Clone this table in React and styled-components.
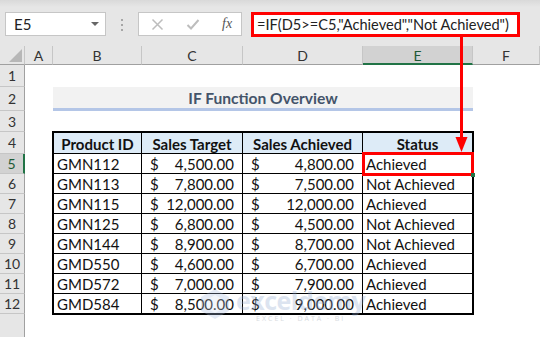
import React from 'react';
import styled, { createGlobalStyle } from 'styled-components';

const Global = createGlobalStyle`
  html, body { margin: 0; padding: 0; background: #fff; }
  body { font-family: Lato, "Open Sans", sans-serif; }
`;

const Page = styled.div`
  position: relative;
  width: 540px;
  height: 337px;
  overflow: hidden;
  display: flex;
  flex-direction: column;
  background: #fff;
`;

const Toolbar = styled.div`
  height: 46px;
  flex: none;
  box-sizing: border-box;
  padding-top: 12px;
  background: linear-gradient(#d9d9d9 0, #e6e6e6 7px);
  display: flex;
  align-items: flex-start;
`;

const NameBox = styled.div`
  margin-left: 5px;
  width: 101px;
  height: 24px;
  box-sizing: border-box;
  background: #fff;
  border: 1px solid #c6c6c6;
  display: flex;
  align-items: center;
  justify-content: space-between;
  padding: 0 6px 0 8px;
  font-size: 15px;
  color: #222;
`;

const DropTri = styled.span`
  width: 0;
  height: 0;
  border-left: 4px solid transparent;
  border-right: 4px solid transparent;
  border-top: 4px solid #666;
`;

const Gripper = styled.div`
  margin: 7px 0 0 15px;
  width: 2px;
  display: flex;
  flex-direction: column;
  gap: 3px;
  span { width: 2px; height: 2px; background: #a6a6a6; display: block; }
`;

const FxBox = styled.div`
  margin-left: 15px;
  width: 104px;
  height: 24px;
  box-sizing: border-box;
  background: #fff;
  border: 1px solid #c6c6c6;
  display: flex;
  align-items: center;
  padding-left: 12px;
  gap: 22px;
`;

const FxText = styled.span`
  font-family: "Liberation Serif", serif;
  font-style: italic;
  font-size: 14px;
  color: #555;
`;

const FormulaBar = styled.div`
  margin-left: 9px;
  width: 269px;
  height: 25px;
  box-sizing: border-box;
  background: #fff;
  border: 3px solid #ff0000;
  display: flex;
  align-items: center;
  padding-left: 3px;
  font-size: 14.6px;
  color: #222;
  white-space: nowrap;
  overflow: hidden;
`;

const Sheet = styled.div`
  flex: 1;
  display: grid;
  grid-template-columns: 25px 28px 89px 101px 120px 110px 1fr;
  grid-template-rows: 19px 22px 24px 21px 22px repeat(8, 20px) 1fr;
`;

const Corner = styled.div`
  grid-column: 1;
  grid-row: 1;
  background: #e6e6e6;
  border-right: 1px solid #c6c6c6;
  border-bottom: 1px solid #a0a0a0;
  box-sizing: border-box;
  position: relative;
  &::after {
    content: '';
    position: absolute;
    right: 2px;
    bottom: 2px;
    border-left: 13px solid transparent;
    border-bottom: 13px solid #b7b7b7;
  }
`;

const ColHead = styled.div`
  grid-row: 1;
  box-sizing: border-box;
  background: ${p => (p.$active ? '#d2d2d2' : '#e6e6e6')};
  border-right: 1px solid #c6c6c6;
  border-bottom: ${p => (p.$active ? '2px solid #217346' : '1px solid #a0a0a0')};
  color: ${p => (p.$active ? '#1e5a36' : '#333')};
  font-size: 14px;
  display: flex;
  align-items: center;
  justify-content: center;
  padding-top: 1px;
`;

const RowHead = styled.div`
  grid-column: 1;
  box-sizing: border-box;
  background: ${p => (p.$active ? '#d2d2d2' : '#e6e6e6')};
  border-bottom: 1px solid #c6c6c6;
  border-right: ${p => (p.$active ? '2px solid #217346' : '1px solid #a0a0a0')};
  color: ${p => (p.$active ? '#1e5a36' : '#333')};
  font-size: 14px;
  display: flex;
  align-items: center;
  justify-content: center;
`;

const RowHeadFill = styled.div`
  grid-column: 1;
  grid-row: 14;
  background: #e6e6e6;
  border-right: 1px solid #a0a0a0;
`;

const Title = styled.div`
  grid-column: 3 / 7;
  grid-row: 3;
  box-sizing: border-box;
  background: #f2f2f2;
  border-bottom: 3px solid #b4c6e7;
  color: #44546a;
  font-weight: 700;
  font-size: 15.6px;
  display: flex;
  align-items: center;
  justify-content: center;
  padding-top: 1px;
`;

const Table = styled.div`
  grid-column: 3 / 7;
  grid-row: 5 / 14;
  margin: -1px;
  border: 2px solid #000;
  display: grid;
  grid-template-columns: 88px 101px 120px 1fr;
  grid-template-rows: 21px repeat(7, 20px) 1fr;
  font-size: 15px;
  color: #111;
`;

const Cell = styled.div`
  box-sizing: border-box;
  border-right: ${p => (p.$lastCol ? 'none' : '1px solid #000')};
  border-bottom: ${p => (p.$lastRow ? 'none' : '1px solid #000')};
  display: flex;
  align-items: center;
  white-space: nowrap;
  padding: 0 3px;
`;

const HeadCell = styled(Cell)`
  background: #ddebf7;
  font-weight: 700;
  justify-content: center;
  padding-top: 1px;
`;

const MoneyCell = styled(Cell)`
  justify-content: space-between;
  padding: 0 8px 0 8px;
`;

const Overlay = styled.svg`
  position: absolute;
  left: 0;
  top: 0;
  pointer-events: none;
`;

const Watermark = styled.div`
  position: absolute;
  left: 198px;
  top: 287px;
  display: flex;
  align-items: flex-start;
  gap: 4px;
  opacity: 0.3;
  pointer-events: none;
`;

const WmText = styled.div`
  display: flex;
  flex-direction: column;
  align-items: center;
`;

const WmBig = styled.span`
  font-family: "Open Sans", sans-serif;
  font-weight: 700;
  font-size: 25px;
  line-height: 26px;
  color: #8fa7cf;
  letter-spacing: -0.5px;
`;

const WmSmall = styled.span`
  font-family: "Open Sans", sans-serif;
  font-size: 7px;
  letter-spacing: 2px;
  color: #7c8796;
  margin-top: 1px;
`;

const cols = ['A', 'B', 'C', 'D', 'E', 'F'];
const data = [
  ['GMN112', '4,500.00', '4,800.00', 'Achieved'],
  ['GMN113', '7,800.00', '7,500.00', 'Not Achieved'],
  ['GMN115', '12,000.00', '12,000.00', 'Achieved'],
  ['GMN125', '6,800.00', '4,500.00', 'Not Achieved'],
  ['GMN144', '8,900.00', '8,700.00', 'Not Achieved'],
  ['GMD550', '4,600.00', '6,700.00', 'Achieved'],
  ['GMD572', '7,000.00', '7,900.00', 'Achieved'],
  ['GMD584', '8,500.00', '9,000.00', 'Achieved'],
];
const rowNums = [1, 2, 3, 4, 5, 6, 7, 8, 9, 10, 11, 12];

export default function App() {
  return (
    <Page>
      <Global />
      <Toolbar>
        <NameBox>
          <span>E5</span>
          <DropTri />
        </NameBox>
        <Gripper>
          <span /><span /><span />
        </Gripper>
        <FxBox>
          <svg width="13" height="13" viewBox="0 0 13 13">
            <path d="M1.5 1.5 L11.5 11.5 M11.5 1.5 L1.5 11.5" stroke="#bdbdbd" strokeWidth="1.5" fill="none" />
          </svg>
          <svg width="14" height="13" viewBox="0 0 14 13">
            <path d="M1.5 7 L5 10.5 L12.5 2" stroke="#bdbdbd" strokeWidth="2" fill="none" />
          </svg>
          <FxText>fx</FxText>
        </FxBox>
        <FormulaBar>=IF(D5&gt;=C5,"Achieved","Not Achieved")</FormulaBar>
      </Toolbar>
      <Sheet>
        <Corner />
        {cols.map((c, i) => (
          <ColHead key={c} $active={c === 'E'} style={{ gridColumn: i + 2 }}>
            {c}
          </ColHead>
        ))}
        {rowNums.map((n, i) => (
          <RowHead key={n} $active={n === 5} style={{ gridRow: i + 2 }}>
            {n}
          </RowHead>
        ))}
        <RowHeadFill />
        <Title>IF Function Overview</Title>
        <Table>
          <HeadCell>Product ID</HeadCell>
          <HeadCell>Sales Target</HeadCell>
          <HeadCell>Sales Achieved</HeadCell>
          <HeadCell $lastCol>Status</HeadCell>
          {data.map((r, i) => {
            const last = i === data.length - 1;
            return (
              <React.Fragment key={r[0]}>
                <Cell $lastRow={last}>{r[0]}</Cell>
                <MoneyCell $lastRow={last}><span>$</span><span>{r[1]}</span></MoneyCell>
                <MoneyCell $lastRow={last}><span>$</span><span>{r[2]}</span></MoneyCell>
                <Cell $lastRow={last} $lastCol>{r[3]}</Cell>
              </React.Fragment>
            );
          })}
        </Table>
      </Sheet>
      <Watermark>
        <svg width="34" height="34" viewBox="0 0 34 34">
          <path d="M17 2 L31 10 L31 24 L17 32 L3 24 L3 10 Z" fill="#a9bde0" />
          <path d="M17 8 L25 12.5 L25 21.5 L17 26 L9 21.5 L9 12.5 Z" fill="#d6e0f0" />
        </svg>
        <WmText>
          <WmBig>exceldemy</WmBig>
          <WmSmall>EXCEL · DATA · BI</WmSmall>
        </WmText>
      </Watermark>
      <Overlay width="540" height="337" viewBox="0 0 540 337">
        <line x1="461.5" y1="37" x2="461.5" y2="139" stroke="#ff0000" strokeWidth="3" />
        <polygon points="455.5,137 467.5,137 461.5,152" fill="#ff0000" />
        <rect x="363.5" y="153.5" width="109" height="21" fill="none" stroke="#ff0000" strokeWidth="3" />
        <rect x="471" y="173" width="4" height="4" fill="#217346" />
      </Overlay>
    </Page>
  );
}
